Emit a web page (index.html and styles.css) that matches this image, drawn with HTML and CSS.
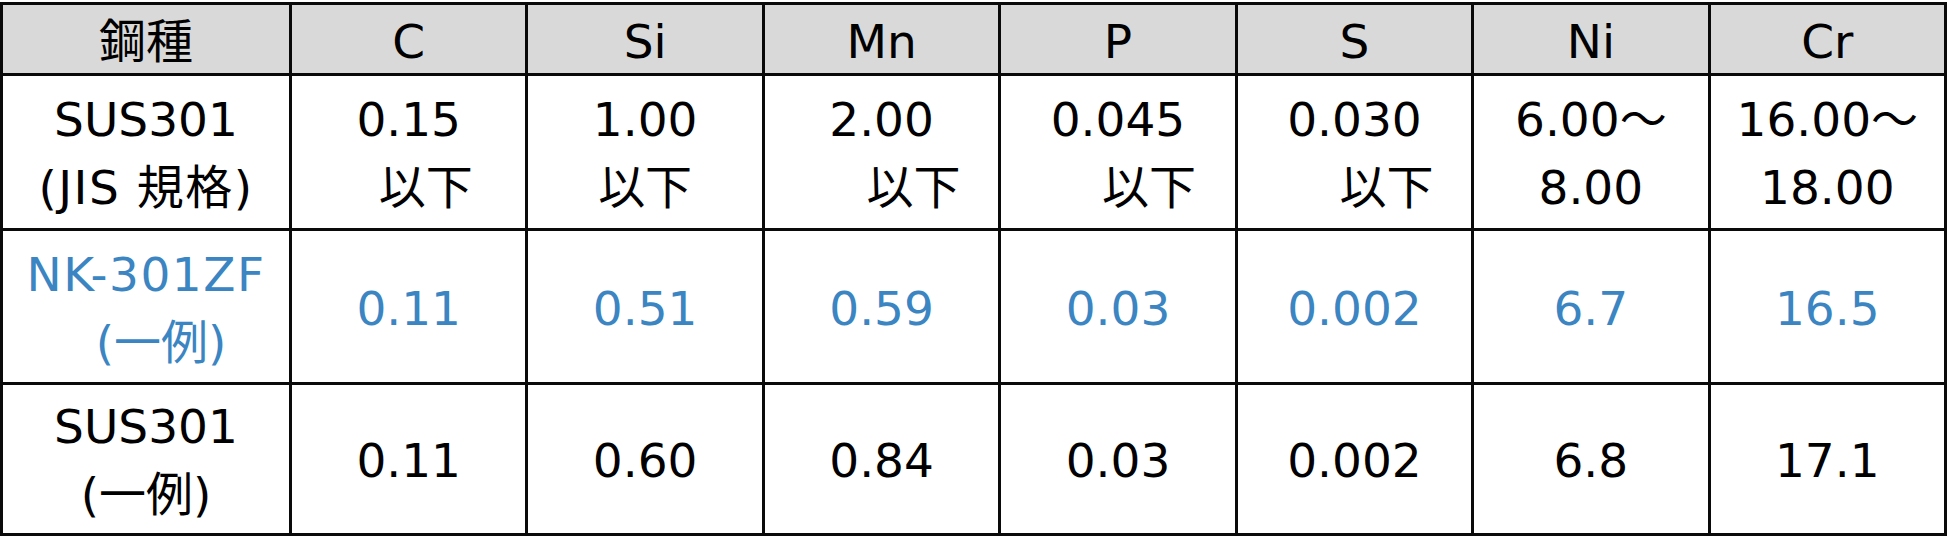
FILE: index.html
```html
<!DOCTYPE html>
<html lang="ja">
<head>
<meta charset="utf-8">
<title>SUS301 成分表</title>
<link rel="stylesheet" href="styles.css">
</head>
<body>
<div class="table">
  <div class="cell head">鋼種</div>
  <div class="cell head">C</div>
  <div class="cell head">Si</div>
  <div class="cell head">Mn</div>
  <div class="cell head">P</div>
  <div class="cell head">S</div>
  <div class="cell head">Ni</div>
  <div class="cell head">Cr</div>

  <div class="cell"><span class="ln">SUS301</span><span class="ln wide">(JIS 規格)</span></div>
  <div class="cell"><span class="ln">0.15</span><span class="ln shift-c">以下</span></div>
  <div class="cell"><span class="ln">1.00</span><span class="ln">以下</span></div>
  <div class="cell"><span class="ln">2.00</span><span class="ln shift-m">以下</span></div>
  <div class="cell"><span class="ln">0.045</span><span class="ln shift-p">以下</span></div>
  <div class="cell"><span class="ln">0.030</span><span class="ln shift-s">以下</span></div>
  <div class="cell"><span class="ln">6.00～</span><span class="ln">8.00</span></div>
  <div class="cell"><span class="ln">16.00～</span><span class="ln">18.00</span></div>

  <div class="cell blue"><span class="ln wide">NK-301ZF</span><span class="ln shift-ex">(一例)</span></div>
  <div class="cell blue"><span class="ln">0.11</span></div>
  <div class="cell blue"><span class="ln">0.51</span></div>
  <div class="cell blue"><span class="ln">0.59</span></div>
  <div class="cell blue"><span class="ln">0.03</span></div>
  <div class="cell blue"><span class="ln">0.002</span></div>
  <div class="cell blue"><span class="ln">6.7</span></div>
  <div class="cell blue"><span class="ln">16.5</span></div>

  <div class="cell"><span class="ln">SUS301</span><span class="ln">(一例)</span></div>
  <div class="cell"><span class="ln">0.11</span></div>
  <div class="cell"><span class="ln">0.60</span></div>
  <div class="cell"><span class="ln">0.84</span></div>
  <div class="cell"><span class="ln">0.03</span></div>
  <div class="cell"><span class="ln">0.002</span></div>
  <div class="cell"><span class="ln">6.8</span></div>
  <div class="cell"><span class="ln">17.1</span></div>
</div>
</body>
</html>
```
FILE: styles.css
```css
html, body {
  margin: 0;
  padding: 0;
  background: #ffffff;
}

body {
  padding-top: 2px;
  font-family: "DejaVu Sans", "Noto Sans CJK JP", sans-serif;
  color: #000000;
}

.table {
  width: 1947px;
  box-sizing: border-box;
  display: grid;
  grid-template-columns: 286px repeat(7, 1fr);
  grid-template-rows: 68px 152px 151px 148px;
  gap: 3px;
  padding: 3px;
  background: #0a0a0a;
}

.cell {
  background: #ffffff;
  display: flex;
  flex-direction: column;
  align-items: center;
  justify-content: center;
  font-size: 47px;
  line-height: 68px;
  padding-top: 4px;
  box-sizing: border-box;
  white-space: nowrap;
}

.head {
  background: #d9d9d9;
  padding-top: 6px;
}

.ln {
  display: block;
}

.wide {
  letter-spacing: 1.5px;
}

.blue {
  color: #3a85c2;
}

.shift-c { padding-left: 34px; }
.shift-m { padding-left: 64px; }
.shift-p { padding-left: 62px; }
.shift-s { padding-left: 64px; }
.shift-ex { padding-left: 30px; }
```
